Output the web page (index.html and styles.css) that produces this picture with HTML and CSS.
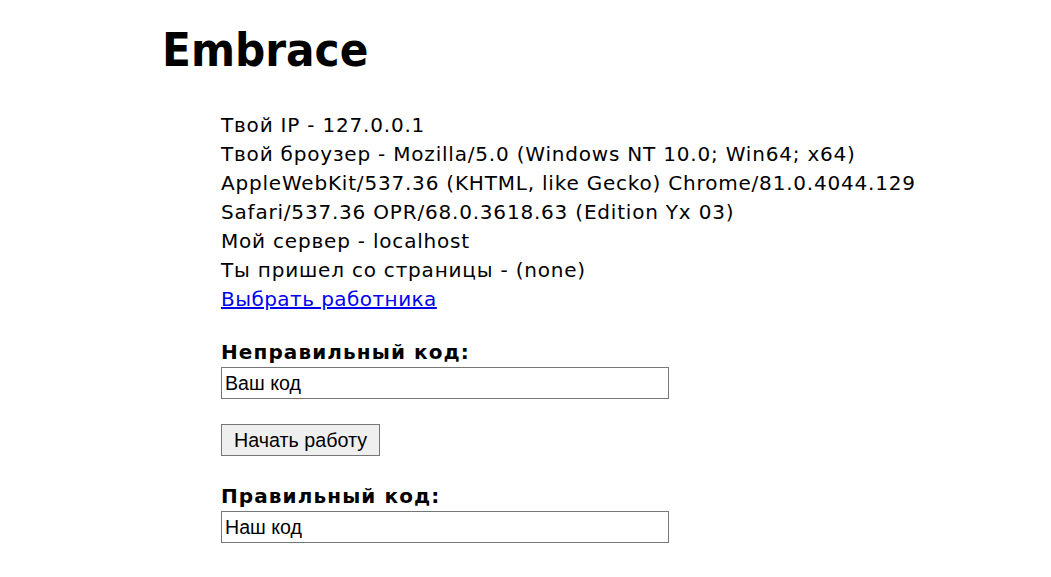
FILE: index.html
```html
<!DOCTYPE html>
<html lang="ru">
<head>
<meta charset="utf-8">
<title>Embrace</title>
<link rel="stylesheet" href="styles.css">
</head>
<body>
<div class="page">
  <h1 class="title">Embrace</h1>
  <div class="content">
    <div class="info">
      <div>Твой IP - 127.0.0.1</div>
      <div>Твой броузер - Mozilla/5.0 (Windows NT 10.0; Win64; x64) AppleWebKit/537.36 (KHTML, like Gecko) Chrome/81.0.4044.129 Safari/537.36 OPR/68.0.3618.63 (Edition Yx 03)</div>
      <div>Мой сервер - localhost</div>
      <div>Ты пришел со страницы - (none)</div>
      <div><a href="#" class="link">Выбрать работника</a></div>
    </div>
    <form class="form">
      <label class="label">Неправильный код:</label>
      <input class="field" type="text" value="Ваш код">
      <button class="btn" type="button">Начать работу</button>
      <label class="label">Правильный код:</label>
      <input class="field" type="text" value="Наш код">
    </form>
  </div>
</div>
</body>
</html>
```
FILE: styles.css
```css
html, body {
  margin: 0;
  padding: 0;
  background: #fff;
}
body {
  font-family: "DejaVu Sans", sans-serif;
  color: #000;
}
.page {
  width: 800px;
  margin-left: 162px;
  padding-top: 22px;
}
.title {
  margin: 0;
  font-size: 47px;
  font-stretch: condensed;
  line-height: 56px;
  font-weight: bold;
}
.content {
  margin-left: 59px;
  margin-top: 33px;
}
.info {
  font-size: 20px;
  letter-spacing: 0.8px;
  line-height: 29px;
}
.link {
  color: #0000ee;
  text-decoration: underline;
  letter-spacing: 0.45px;
}
.form {
  display: flex;
  flex-direction: column;
  align-items: flex-start;
  margin-top: 23px;
}
.label {
  font-size: 20px;
  font-weight: bold;
  letter-spacing: 1.1px;
  line-height: 30px;
}
.field {
  box-sizing: border-box;
  width: 448px;
  height: 32px;
  margin: 0;
  padding: 1px 3px;
  border: 1px solid #767676;
  font-family: "Liberation Sans", Arial, sans-serif;
  font-size: 19.6px;
  color: #000;
  background: #fff;
}
.btn {
  box-sizing: border-box;
  height: 32px;
  margin: 25px 0;
  padding: 1px 12px;
  border: 1px solid #767676;
  border-radius: 0;
  background: #efefef;
  font-family: "Liberation Sans", Arial, sans-serif;
  font-size: 19.7px;
  color: #000;
}
```
